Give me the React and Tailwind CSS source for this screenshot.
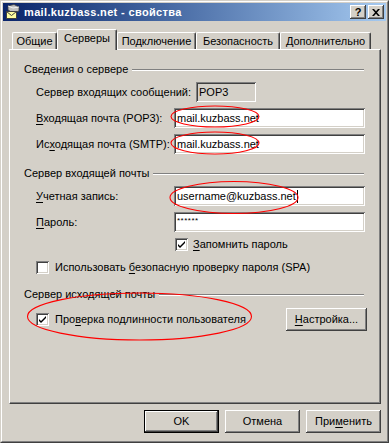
import React from "react";

const raised = "shadow-[inset_-1px_-1px_0_#404040,inset_1px_1px_0_#ffffff,inset_-2px_-2px_0_#808080,inset_2px_2px_0_#d4d0c8]";
const sunken = "shadow-[inset_1px_1px_0_#808080,inset_-1px_-1px_0_#ffffff,inset_2px_2px_0_#404040,inset_-2px_-2px_0_#d4d0c8]";

const U = ({ children }) => <span className="underline underline-offset-[2px]">{children}</span>;

const MailIcon = () => (
  <svg width="16" height="16" viewBox="0 0 16 16" className="shrink-0">
    <path d="M3 2 L9 0.5 L14 3 L14 7 L8 9 L3 6 Z" fill="#c0c0c0" stroke="#404040" strokeWidth="0.8" />
    <path d="M3 2 L8 4 L14 3" fill="none" stroke="#ffffff" strokeWidth="0.8" />
    <rect x="1.5" y="7.5" width="10" height="7" fill="#ffffa0" stroke="#404040" strokeWidth="1" />
    <path d="M1.5 7.5 L6.5 11.5 L11.5 7.5" fill="none" stroke="#404040" strokeWidth="1" />
  </svg>
);

const Check = () => (
  <svg width="9" height="9" viewBox="0 0 9 9">
    <path d="M1 4 L3 6 L8 1 L8 3 L3 8 L1 6 Z" fill="#000" />
  </svg>
);

const CheckBox = ({ checked }) => (
  <div className={`w-[13px] h-[13px] bg-white flex items-center justify-center shrink-0 ${sunken}`}>
    {checked && <Check />}
  </div>
);

const Field = ({ children, width = "w-[191px]", gray }) => (
  <div className={`${width} h-[20px] flex items-center pl-[3px] ${gray ? "bg-[#d4d0c8]" : "bg-white"} ${sunken}`}>
    {children}
  </div>
);

const Header = ({ title, mt }) => (
  <div className={`flex items-center h-[13px] pl-[14px] pr-[16px] ${mt}`}>
    <span>{title}</span>
    <div className="flex-1 ml-[4px] h-[2px] border-t border-t-[#808080] border-b border-b-white" />
  </div>
);

const Tab = ({ label, w, active }) => (
  <div
    className={`${w} flex items-center justify-center border-t border-l border-white rounded-t-[2px] bg-[#d4d0c8] shadow-[inset_-1px_0_0_#808080] border-r border-r-[#404040] ${
      active ? "h-[21px] -mb-px relative z-10 pb-[3px]" : "h-[17px] pt-[1px]"
    }`}
  >
    {label}
  </div>
);

const Button = ({ children, def, w = "w-[75px]" }) => (
  <div className={`${w} h-[23px] ${def ? "border border-black" : ""}`}>
    <div className={`w-full h-full flex items-center justify-center bg-[#d4d0c8] ${raised}`}>{children}</div>
  </div>
);

export default function App() {
  return (
    <div className="relative w-[389px] h-[443px] bg-[#d4d0c8] text-[11px] leading-none text-black font-['Liberation_Sans',Arial,sans-serif] select-none">
      <div className="h-full border border-t-[#d4d0c8] border-l-[#d4d0c8] border-r-[#404040] border-b-[#404040]">
        <div className="h-full border border-t-white border-l-white border-r-[#808080] border-b-[#808080] p-px flex flex-col">
          {/* title bar */}
          <div className="h-[18px] flex items-center bg-gradient-to-r from-[#0a246a] to-[#a6caf0] pl-[2px] pr-[2px]">
            <MailIcon />
            <span className="ml-[3px] text-white font-bold text-[11px] tracking-[0.35px]">mail.kuzbass.net - свойства</span>
            <div className="ml-auto flex gap-[2px]">
              <div className={`w-[16px] h-[14px] bg-[#d4d0c8] flex items-center justify-center font-bold text-[11px] ${raised}`}>?</div>
              <div className={`w-[16px] h-[14px] bg-[#d4d0c8] flex items-center justify-center ${raised}`}>
                <svg width="8" height="7" viewBox="0 0 8 7">
                  <path d="M0 0 H2 L4 2.2 L6 0 H8 L5 3.5 L8 7 H6 L4 4.8 L2 7 H0 L3 3.5 Z" fill="#000" />
                </svg>
              </div>
            </div>
          </div>

          <div className="flex-1 pl-[6px] pt-[8px]">
            {/* tabs */}
            <div className="flex items-end h-[20px] pl-[3px]">
              <Tab label="Общие" w="w-[45px]" />
              <Tab label="Серверы" w="w-[60px]" active />
              <Tab label="Подключение" w="w-[79px]" />
              <Tab label="Безопасность" w="w-[84px]" />
              <Tab label="Дополнительно" w="w-[91px]" />
            </div>

            {/* panel */}
            <div className="w-[372px] h-[355px] border-t border-l border-white border-r border-b border-r-[#404040] border-b-[#404040] shadow-[inset_-1px_-1px_0_#808080] flex flex-col">
              <Header title="Сведения о сервере" mt="mt-[13px]" />

              <div className="flex items-center h-[20px] mt-[6px] pl-[26px]">
                <span className="w-[160px]">Сервер вхо<U>д</U>ящих сообщений:</span>
                <Field width="w-[60px]" gray>POP3</Field>
              </div>
              <div className="flex items-center h-[20px] mt-[6px] pl-[26px]">
                <span className="w-[138px]"><U>В</U>ходящая почта (POP3):</span>
                <Field>mail.kuzbass.net</Field>
              </div>
              <div className="flex items-center h-[20px] mt-[6px] pl-[26px]">
                <span className="w-[138px]">Ис<U>х</U>одящая почта (SMTP):</span>
                <Field>mail.kuzbass.net</Field>
              </div>

              <Header title="Сервер входящей почты" mt="mt-[13px]" />

              <div className="flex items-center h-[20px] mt-[6px] pl-[26px]">
                <span className="w-[138px]"><U>У</U>четная запись:</span>
                <Field>
                  username@kuzbass.net
                  <span className="w-px h-[13px] bg-black ml-px" />
                </Field>
              </div>
              <div className="flex items-center h-[20px] mt-[6px] pl-[26px]">
                <span className="w-[138px]"><U>П</U>ароль:</span>
                <Field><span className="text-[8px] tracking-[0.5px] -mt-[3px]">******</span></Field>
              </div>
              <div className="flex items-center h-[13px] mt-[6px] pl-[165px] gap-[5px]">
                <CheckBox checked />
                <span><U>З</U>апомнить пароль</span>
              </div>
              <div className="flex items-center h-[13px] mt-[10px] pl-[26px] gap-[6px]">
                <CheckBox />
                <span>Использовать <U>б</U>езопасную проверку пароля (SPA)</span>
              </div>

              <Header title="Сервер исходящей почты" mt="mt-[14px]" />

              <div className="flex items-center h-[23px] mt-[7px] pl-[26px] pr-[13px]">
                <CheckBox checked />
                <span className="ml-[6px]">Про<U>в</U>ерка подлинности пользователя</span>
                <div className="ml-auto">
                  <Button w="w-[81px]"><U>Н</U>астройка...</Button>
                </div>
              </div>
            </div>

            {/* dialog buttons */}
            <div className="w-[372px] flex justify-end gap-[6px] mt-[6px]">
              <Button def>OK</Button>
              <Button>Отмена</Button>
              <Button>При<U>м</U>енить</Button>
            </div>
          </div>
        </div>
      </div>

      {/* red annotation ellipses */}
      <svg className="absolute inset-0 pointer-events-none" width="389" height="443" viewBox="0 0 389 443">
        <g fill="none" stroke="#ff0000" strokeWidth="1.1">
          <ellipse cx="215" cy="116.5" rx="44" ry="10.5" />
          <ellipse cx="215" cy="143" rx="44" ry="11" />
          <ellipse cx="234" cy="197.5" rx="64" ry="16" />
          <ellipse cx="139.5" cy="316.5" rx="112" ry="23.5" />
        </g>
      </svg>
    </div>
  );
}
